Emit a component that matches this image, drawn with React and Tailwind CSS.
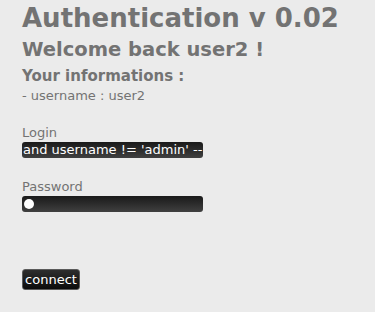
export default function App() {
  return (
    <div className="w-[375px] h-[312px] bg-[#ebebeb] text-[#737373] overflow-hidden" style={{ fontFamily: '"DejaVu Sans", sans-serif' }}>
      <div className="pl-[22px] pt-[2px]">
        <h1 className="text-[26px] font-bold leading-[32px]">Authentication v 0.02</h1>
        <h2 className="text-[19.5px] font-bold leading-[24px] mt-[4px]">Welcome back user2 !</h2>
        <h3 className="text-[15px] font-bold leading-[18px] mt-[5px]">Your informations :</h3>
        <p className="text-[13px] leading-[16px] mt-[3px]">- username : user2</p>
        <div className="mt-[21px] text-[13px] leading-[16px]">Login</div>
        <div className="mt-[1px] w-[181px] h-[16px] rounded-[3px] bg-gradient-to-b from-[#1a1a1a] to-[#404040] text-white text-[13px] leading-[16px] pl-[1px] overflow-hidden whitespace-nowrap">and username != 'admin' --</div>
        <div className="mt-[21px] text-[13px] leading-[16px]">Password</div>
        <div className="mt-[1px] w-[181px] h-[16px] rounded-[3px] bg-gradient-to-b from-[#1a1a1a] to-[#404040] flex items-center pl-[2px]">
          <div className="w-[10px] h-[10px] rounded-full bg-white" />
        </div>
        <button className="mt-[57px] h-[21px] w-[58px] rounded-[3px] bg-gradient-to-b from-[#2e2e2e] to-[#0c0c0c] border border-[#5a5a5a] text-white text-[13px] leading-[17px] flex items-center justify-center">connect</button>
      </div>
    </div>
  );
}
